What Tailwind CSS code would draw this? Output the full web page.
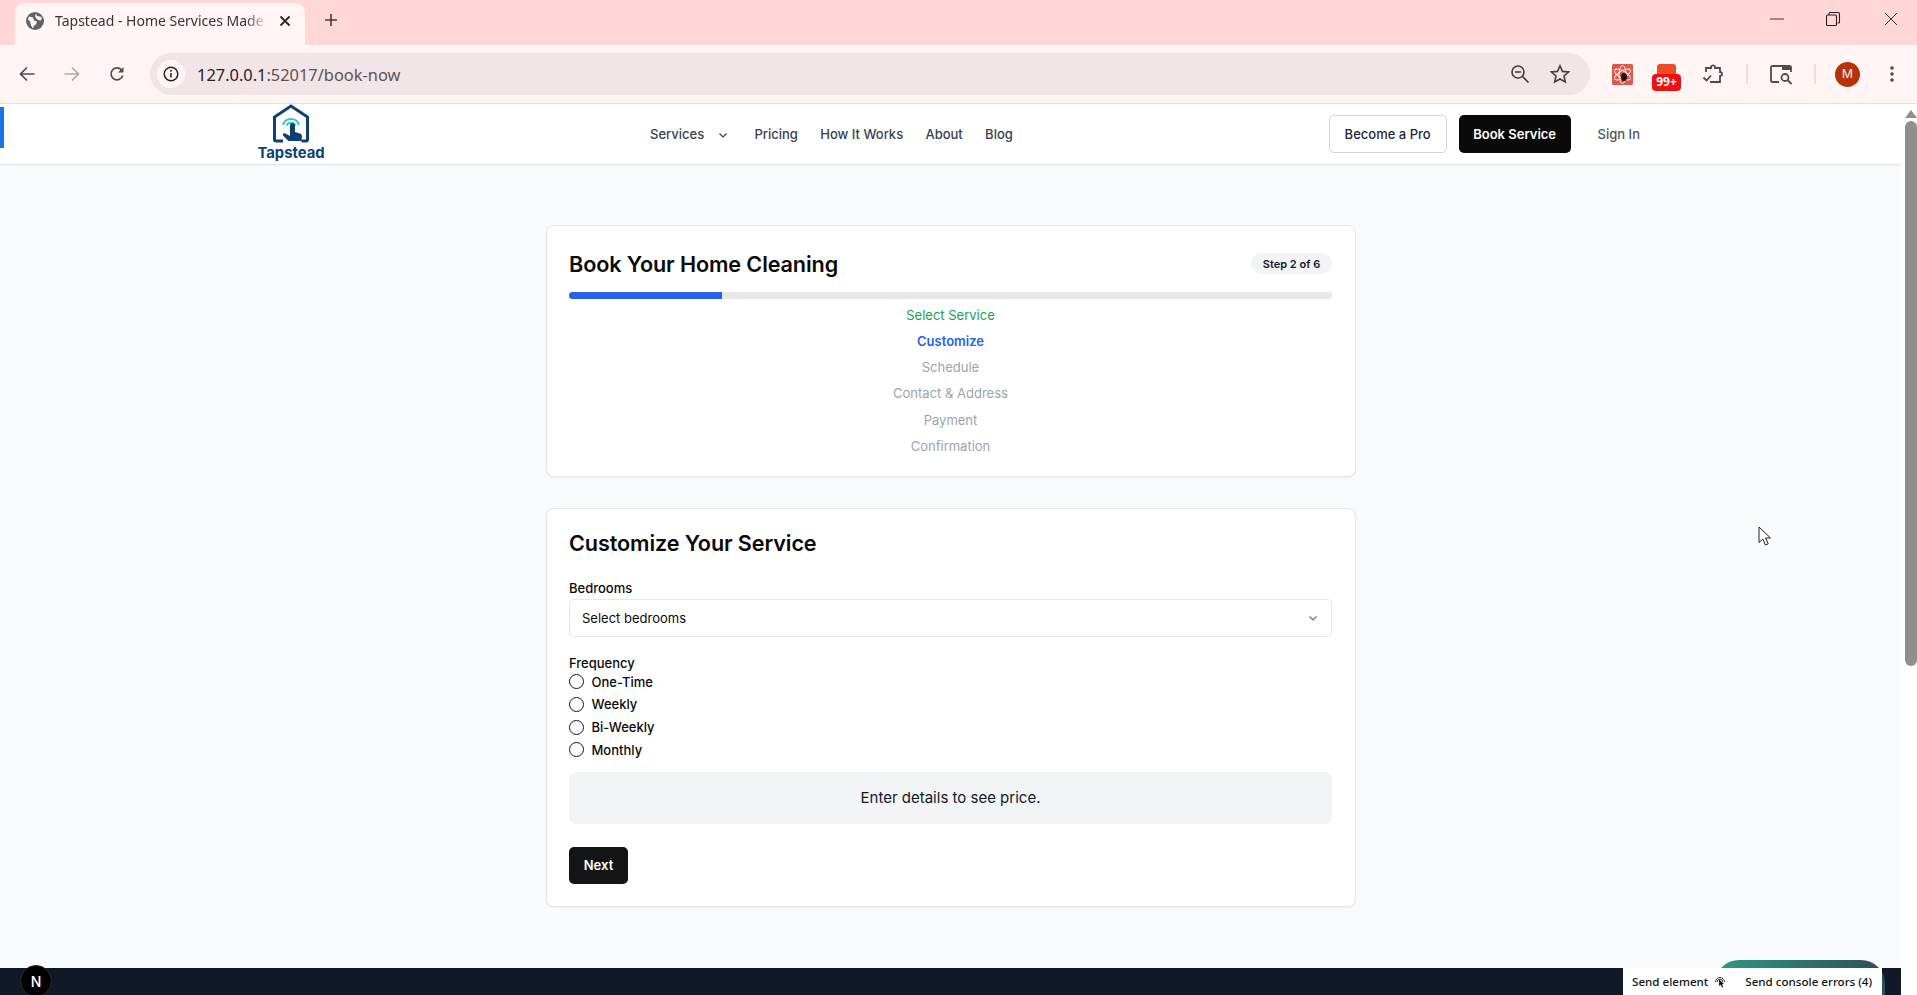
<!doctype html>
<html lang="en">
<head>
<meta charset="utf-8">
<title>Tapstead - Home Services Made Easy</title>
<script src="https://cdn.jsdelivr.net/npm/@tailwindcss/browser@4"></script>
</head>
<body class="m-0 overflow-hidden bg-white">
<div class="relative flex h-[995px] w-[1917px] flex-col overflow-hidden font-['Inter',sans-serif]">

  <!-- tab strip -->
  <div class="flex h-[45px] shrink-0 items-end bg-[#ffd7d7] pl-[15px]">
    <div class="flex h-[42px] w-[290px] items-center rounded-t-[10px] bg-[#fff5f4] pb-[7px] pl-[11px]">
      <svg class="h-[18px] w-[18px] shrink-0" viewBox="0 0 18 18"><circle cx="9" cy="9" r="9" fill="#5f6368"/><path d="M3 4.500l4 1 1 3 3 1-1 3-2 1-1 3-2-3-1-4-2-2zM10 1.500l1 2.500 3 .5 2 1-1 3-3-.5-2-2-1-2z" fill="#fff5f4"/></svg>
      <span class="ml-[11px] w-[214px] whitespace-nowrap font-['Noto_Sans',sans-serif] text-[14px] text-[#3b3133] [mask-image:linear-gradient(to_right,black_190px,transparent_214px)]">Tapstead - Home Services Made</span>
      <svg class="ml-[10px] h-[12px] w-[12px] shrink-0" viewBox="0 0 12 12"><path d="M1.500 1.500l9 9M10.500 1.500l-9 9" stroke="#2a2224" stroke-width="1.800" fill="none"/></svg>
    </div>
    <svg class="mb-[18px] ml-[19px] h-[14px] w-[14px]" viewBox="0 0 14 14"><path d="M7 1v12M1 7h12" stroke="#4a3c3f" stroke-width="1.600"/></svg>
    <div class="mb-[18px] ml-auto flex items-center">
      <svg class="h-[16px] w-[16px]" viewBox="0 0 16 16"><path d="M1 8h14" stroke="#6b5b5e" stroke-width="1.300"/></svg>
      <svg class="ml-[40px] h-[16px] w-[16px]" viewBox="0 0 16 16"><path d="M4 3.500V2.500a1 1 0 0 1 1-1h8a1.500 1.500 0 0 1 1.500 1.500v8a1 1 0 0 1-1 1h-1M2.500 4h8A1 1 0 0 1 11.500 5v8.500a1 1 0 0 1-1 1h-8a1 1 0 0 1-1-1V5a1 1 0 0 1 1-1z" fill="none" stroke="#2a2224" stroke-width="1.100"/></svg>
      <svg class="ml-[42px] mr-[18px] h-[16px] w-[16px]" viewBox="0 0 16 16"><path d="M2 2l12 12M14 2L2 14" stroke="#3b3133" stroke-width="1"/></svg>
    </div>
  </div>

  <!-- toolbar -->
  <div class="flex h-[59px] shrink-0 items-center border-b border-[#eadfe0] bg-[#fff5f4] pl-[19px]">
    <svg class="h-[16px] w-[16px] shrink-0" viewBox="0 0 16 16"><path d="M15.500 8H1.500M8 1.500L1.500 8 8 14.500" fill="none" stroke="#55484b" stroke-width="1.700"/></svg>
    <svg class="ml-[29px] h-[16px] w-[16px] shrink-0" viewBox="0 0 16 16"><path d="M.5 8h14M8 1.500L14.500 8 8 14.500" fill="none" stroke="#b5a9ab" stroke-width="1.700"/></svg>
    <svg class="ml-[29px] h-[16px] w-[16px] shrink-0" viewBox="0 0 16 16"><path d="M13.800 9.500A6 6 0 1 1 12.500 3.800" fill="none" stroke="#55484b" stroke-width="1.700"/><path d="M14.500 1v5.500H9z" fill="#55484b"/></svg>
    <div class="ml-[25px] flex h-[42px] w-[1440px] shrink-0 items-center rounded-full bg-[#f1e5e8] pl-[7px]">
      <div class="flex h-[28px] w-[28px] items-center justify-center rounded-full bg-[#fff5f4]">
        <svg class="h-[16px] w-[16px]" viewBox="0 0 16 16"><circle cx="8" cy="8" r="6.800" fill="none" stroke="#2a2224" stroke-width="1.500"/><path d="M8 7v4.500" stroke="#2a2224" stroke-width="1.600"/><circle cx="8" cy="4.800" r="1" fill="#2a2224"/></svg>
      </div>
      <span class="ml-[12px] pt-[2px] font-['Noto_Sans',sans-serif] text-[16.400px] text-[#2a2224]">127.0.0.1<span class="text-[#5f5255]">:52017/book-now</span></span>
      <svg class="ml-auto h-[20px] w-[20px]" viewBox="0 0 20 20"><circle cx="8" cy="8" r="6" fill="none" stroke="#4a3c3f" stroke-width="1.600"/><path d="M5 8h6M12.500 12.500l6 6" stroke="#4a3c3f" stroke-width="1.600"/></svg>
      <svg class="ml-[20px] mr-[20px] h-[20px] w-[20px]" viewBox="0 0 20 20"><path d="M10 1.800l2.500 5.600 6 .6-4.500 4 1.300 6L10 15l-5.300 3 1.300-6-4.500-4 6-.6z" fill="none" stroke="#4a3c3f" stroke-width="1.600"/></svg>
    </div>
    <svg class="ml-[22px] h-[21px] w-[21px] shrink-0" viewBox="0 0 21 21"><rect width="21" height="21" rx="1.500" fill="#dc5a4c"/><g fill="none" stroke="#fff" stroke-width=".9"><ellipse cx="10.500" cy="10.500" rx="9" ry="3.500" transform="rotate(30 10.500 10.500)"/><ellipse cx="10.500" cy="10.500" rx="9" ry="3.500" transform="rotate(-30 10.500 10.500)"/><ellipse cx="10.500" cy="10.500" rx="3.500" ry="9"/></g><ellipse cx="12" cy="13" rx="3" ry="4" fill="#1c1513"/></svg>
    <div class="relative ml-[19px] mt-[6px] h-[27px] w-[30px] shrink-0">
      <div class="absolute left-[5px] top-0 h-[14px] w-[19px] rounded-t-[3px] bg-[#ee4b2b]"></div>
      <div class="absolute bottom-[0px] left-0 flex h-[17px] w-[29px] items-center justify-center rounded-[4px] bg-[#ee1111] font-['Noto_Sans',sans-serif] text-[12px] font-bold text-white">99+</div>
    </div>
    <svg class="ml-[19.500px] h-[24px] w-[24px] shrink-0" viewBox="0 0 24 24"><path d="M4 10V6h5a2 2 0 0 1 4-1v1h5v4a2 2 0 0 1 0 4v6H8" fill="none" stroke="#55484b" stroke-width="1.800"/><path d="M1.500 15.500l3 3 4.500-5" fill="none" stroke="#55484b" stroke-width="1.800"/></svg>
    <div class="ml-[20px] h-[20px] w-[2px] shrink-0 bg-[#fbd8d9]"></div>
    <svg class="ml-[22.500px] h-[22px] w-[22px] shrink-0" viewBox="0 0 22 22"><path d="M9 19H2.500a1.500 1.500 0 0 1-1.500-1.500v-13A1.500 1.500 0 0 1 2.500 3h17A1.500 1.500 0 0 1 21 4.500V9" fill="none" stroke="#55484b" stroke-width="1.800"/><path d="M12 3h9v4h-9z" fill="#55484b"/><circle cx="15" cy="14.500" r="3.500" fill="none" stroke="#55484b" stroke-width="1.800"/><path d="M17.500 17l4 4" stroke="#55484b" stroke-width="1.800"/></svg>
    <div class="ml-[22px] h-[20px] w-[2px] shrink-0 bg-[#fbd8d9]"></div>
    <div class="ml-[19px] flex h-[25px] w-[25px] shrink-0 items-center justify-center rounded-full bg-[#b93205] font-['Noto_Sans',sans-serif] text-[12.500px] text-white">M</div>
    <svg class="ml-[29px] h-[18px] w-[6px] shrink-0" viewBox="0 0 6 18"><circle cx="3" cy="3" r="1.800" fill="#55484b"/><circle cx="3" cy="9" r="1.800" fill="#55484b"/><circle cx="3" cy="15" r="1.800" fill="#55484b"/></svg>
  </div>

  <!-- viewport -->
  <div class="flex min-h-0 flex-1">
    <div class="flex min-w-0 flex-1 flex-col bg-[#f9fafb]">
      <header class="flex h-[60.500px] shrink-0 items-center border-b border-[#e5e7eb] bg-white shadow-[0_1px_2px_rgba(0,0,0,0.04)]">
        <div class="mx-auto flex h-full w-[1387px] items-center">
          <div class="flex h-full w-[68px] shrink-0 flex-col items-center">
            <svg class="h-[39px] w-[38px] shrink-0" viewBox="0 0 38 39">
              <path d="M29.500 37H34a1.500 1.500 0 0 0 1.500-1.500V13L19 2 2.500 13v22.500A1.500 1.500 0 0 0 4 37h7" fill="none" stroke="#0d4173" stroke-width="3"/>
              <path d="M11 21a8.300 8.300 0 0 1 16 0" fill="none" stroke="#3fc5c0" stroke-width="2"/>
              <path d="M14.500 21.500a5 5 0 0 1 9 0" fill="none" stroke="#3fc5c0" stroke-width="2"/>
              <path d="M18 21.500a2.500 2.500 0 0 1 5 0v6.500l5 1.500c1.500.5 2 1.500 2 3l-.5 4.500H16.500L11 31.500c-1-1.500 1-3 2.500-2l4.500 2.500z" fill="#0d4173"/>
            </svg>
            <span class="mt-[2px] text-[14.800px] font-bold leading-[17px] text-[#0d4173]">Tapstead</span>
          </div>
          <nav class="ml-[325px] flex items-center gap-[22.300px] pt-[2px] text-[13px] font-medium text-[#374151]">
            <span class="flex items-center">Services<svg class="ml-[14px] h-[10px] w-[10px]" viewBox="0 0 10 10"><path d="M1.500 3.500L5 7l3.500-3.500" fill="none" stroke="#374151" stroke-width="1.200"/></svg><span class="w-[4px]"></span></span>
            <span>Pricing</span>
            <span>How It Works</span>
            <span>About</span>
            <span>Blog</span>
          </nav>
          <div class="ml-auto flex items-center text-[13px] font-medium">
            <span class="flex h-[38px] w-[118px] items-center justify-center rounded-[5px] border border-[#d1d5db] bg-white pt-[2px] text-[#1f2937]">Become a Pro</span>
            <span class="ml-[12px] flex h-[38px] w-[112px] items-center justify-center rounded-[5px] bg-[#0a0a0a] pt-[2px] font-semibold text-white">Book Service</span>
            <span class="ml-[27px] mr-[4px] pt-[2px] text-[#4b5563]">Sign In</span>
          </div>
        </div>
      </header>

      <main class="min-h-0 flex-1 overflow-hidden pt-[60.500px]">
        <div class="mx-auto flex w-[810px] flex-col gap-[31px]">
          <section class="h-[252px] rounded-[8px] border border-[#e5e7eb] bg-white px-[22.500px] py-[21.600px] shadow-[0_1px_2px_rgba(0,0,0,0.05)]">
            <div class="flex h-[32.400px] items-center justify-between">
              <h1 class="text-[21.600px] font-semibold leading-[32.400px] tracking-[-0.1px] text-[#0a0a0a]">Book Your Home Cleaning</h1>
              <span class="flex h-[21px] w-[81px] items-center justify-center rounded-full bg-[#f3f4f6] text-[11px] font-semibold text-[#111827]">Step 2 of 6</span>
            </div>
            <div class="mt-[12px] h-[7.200px] overflow-hidden rounded-full bg-[#e5e7eb]">
              <div class="h-full w-[20%] bg-[#2563eb]"></div>
            </div>
            <ol class="mt-[6.600px] flex flex-col gap-[8.200px] text-center text-[13px] leading-[18px] text-[#9ca3af]">
              <li class="text-[#16a34a]">Select Service</li>
              <li class="font-semibold text-[#2563eb]">Customize</li>
              <li>Schedule</li>
              <li>Contact &amp; Address</li>
              <li>Payment</li>
              <li>Confirmation</li>
            </ol>
          </section>

          <section class="h-[399px] rounded-[8px] border border-[#e5e7eb] bg-white px-[22.500px] py-[21.600px] shadow-[0_1px_2px_rgba(0,0,0,0.05)]">
            <h2 class="text-[21.600px] font-semibold leading-[25px] tracking-[-0.1px] text-[#0a0a0a]">Customize Your Service</h2>
            <label class="mt-[23.400px] block text-[13px] font-medium leading-[18px] text-[#0a0a0a]">Bedrooms</label>
            <div class="mt-[2px] flex h-[38px] items-center justify-between rounded-[5px] border border-[#e5e7eb] bg-white px-[12px] pt-[1px] text-[13px] text-[#0a0a0a]">
              <span>Select bedrooms</span>
              <svg class="h-[12px] w-[12px]" viewBox="0 0 12 12"><path d="M2.500 4.500L6 8l3.500-3.500" fill="none" stroke="#6b7280" stroke-width="1.200"/></svg>
            </div>
            <div class="mt-[17px] text-[13px] font-medium leading-[18px] text-[#0a0a0a]">Frequency</div>
            <div class="mt-[0.700px] flex flex-col gap-[4.700px] text-[13px] font-medium leading-[18px] text-[#0a0a0a]">
              <div class="flex items-center gap-[7.500px]"><span class="h-[15px] w-[15px] rounded-full border border-[#171717] bg-white"></span>One-Time</div>
              <div class="flex items-center gap-[7.500px]"><span class="h-[15px] w-[15px] rounded-full border border-[#171717] bg-white"></span>Weekly</div>
              <div class="flex items-center gap-[7.500px]"><span class="h-[15px] w-[15px] rounded-full border border-[#171717] bg-white"></span>Bi-Weekly</div>
              <div class="flex items-center gap-[7.500px]"><span class="h-[15px] w-[15px] rounded-full border border-[#171717] bg-white"></span>Monthly</div>
            </div>
            <div class="mt-[13px] flex h-[52px] items-center justify-center rounded-[7px] bg-[#f3f4f6] pt-[1px] text-[15px] text-[#111827]">Enter details to see price.</div>
            <button class="mt-[23.500px] flex h-[37px] w-[59px] items-center justify-center rounded-[5px] bg-[#141414] text-[13px] font-semibold text-white">Next</button>
          </section>
        </div>
      </main>

      <footer class="h-[27px] shrink-0 bg-[#111827]"></footer>
    </div>

    <!-- scrollbar -->
    <div class="flex w-[16px] shrink-0 flex-col items-center bg-white pl-[4px] pt-[6px]">
      <div class="h-0 w-0 border-x-[6px] border-b-[8px] border-x-transparent border-b-[#8f8f8f]"></div>
      <div class="mt-[3px] h-[545px] w-[12px] rounded-full bg-[#8f8f8f]"></div>
    </div>
  </div>

  <!-- overlays -->
  <div class="absolute left-0 top-[107px] h-[41px] w-[4px] bg-[#1a73e8]"></div>

  <div class="absolute left-[20px] top-[965px] flex h-[32px] w-[32px] items-center justify-center rounded-full border border-[#2a2a2a] bg-black text-[14px] font-medium text-white">N</div>

  <div class="absolute left-[1715px] top-[960px] h-[40px] w-[170px] rounded-t-[24px] bg-gradient-to-r from-[#2a9a85] to-[#2d4f57]"></div>
  <div class="absolute left-[1623px] top-[968px] flex h-[27px] w-[259px] items-center bg-white pl-[9px] font-['Noto_Sans',sans-serif] text-[11.600px] font-medium text-[#111]">
    <span>Send element</span>
    <svg class="ml-[6px] h-[13px] w-[12px]" viewBox="0 0 12 13"><path d="M1.500 7a4.500 4.500 0 1 1 9 0M3.200 7a2.800 2.800 0 1 1 5.600 0" fill="none" stroke="#333" stroke-width="1"/><path d="M5 4.500l5 4.500-2 .3 1.200 2.700-1.200.5-1.200-2.700L5.200 11z" fill="#111"/></svg>
    <span class="ml-[19px]">Send console errors (4)</span>
  </div>

  <svg class="absolute left-[1758px] top-[526px] h-[21px] w-[13px]" viewBox="0 0 13 21"><path d="M1 1v15.500l3.800-3.500 2.600 6 2.800-1.200-2.600-5.800H12.500z" fill="#fff" stroke="#222" stroke-width="1"/></svg>
</div>
</body>
</html>
